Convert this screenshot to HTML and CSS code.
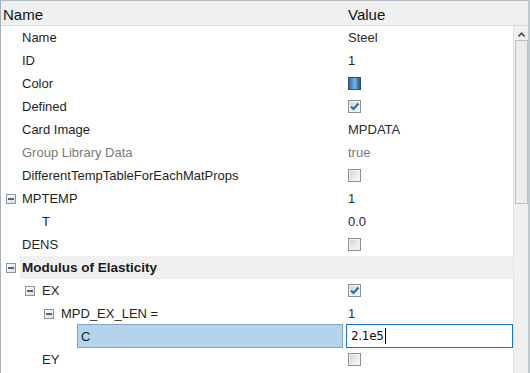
FILE: index.html
```html
<!DOCTYPE html>
<html lang="en">

<head>
    <meta charset="UTF-8">
    <title>Material Properties</title>
    <link rel="stylesheet" href="styles.css">
</head>

<body>
    <div class="grid">
        <div class="header">
            <div class="head-name">Name</div>
            <div class="head-value">Value</div>
        </div>

        <div class="body">
            <div class="rows">
                <div class="row">
                    <div class="gutter"></div>
                    <div class="main">
                        <div class="name">Name</div>
                        <div class="value">Steel</div>
                    </div>
                </div>
                <div class="row">
                    <div class="gutter"></div>
                    <div class="main">
                        <div class="name">ID</div>
                        <div class="value">1</div>
                    </div>
                </div>
                <div class="row">
                    <div class="gutter"></div>
                    <div class="main">
                        <div class="name">Color</div>
                        <div class="value"><span class="swatch"></span></div>
                    </div>
                </div>
                <div class="row">
                    <div class="gutter"></div>
                    <div class="main">
                        <div class="name">Defined</div>
                        <div class="value"><span class="check checked"><svg viewBox="0 0 11 11" width="11" height="11"><path d="M2 5.5 L4.5 8 L9.5 2.5" fill="none" stroke="#1f6db5" stroke-width="2"/></svg></span></div>
                    </div>
                </div>
                <div class="row">
                    <div class="gutter"></div>
                    <div class="main">
                        <div class="name">Card Image</div>
                        <div class="value">MPDATA</div>
                    </div>
                </div>
                <div class="row muted">
                    <div class="gutter"></div>
                    <div class="main">
                        <div class="name">Group Library Data</div>
                        <div class="value">true</div>
                    </div>
                </div>
                <div class="row">
                    <div class="gutter"></div>
                    <div class="main">
                        <div class="name">DifferentTempTableForEachMatProps</div>
                        <div class="value"><span class="check"></span></div>
                    </div>
                </div>
                <div class="row">
                    <div class="gutter"><span class="toggle"></span></div>
                    <div class="main">
                        <div class="name">MPTEMP</div>
                        <div class="value">1</div>
                    </div>
                </div>
                <div class="row">
                    <div class="gutter"></div>
                    <div class="main">
                        <div class="name leaf-1">T</div>
                        <div class="value">0.0</div>
                    </div>
                </div>
                <div class="row">
                    <div class="gutter"></div>
                    <div class="main">
                        <div class="name">DENS</div>
                        <div class="value"><span class="check"></span></div>
                    </div>
                </div>
                <div class="row section">
                    <div class="gutter"><span class="toggle"></span></div>
                    <div class="main">
                        <div class="name">Modulus of Elasticity</div>
                        <div class="value"></div>
                    </div>
                </div>
                <div class="row">
                    <div class="gutter"></div>
                    <div class="main">
                        <div class="name level-1"><span class="toggle"></span>EX</div>
                        <div class="value"><span class="check checked"><svg viewBox="0 0 11 11" width="11" height="11"><path d="M2 5.5 L4.5 8 L9.5 2.5" fill="none" stroke="#1f6db5" stroke-width="2"/></svg></span></div>
                    </div>
                </div>
                <div class="row">
                    <div class="gutter"></div>
                    <div class="main">
                        <div class="name level-2"><span class="toggle"></span>MPD_EX_LEN =</div>
                        <div class="value">1</div>
                    </div>
                </div>
                <div class="row">
                    <div class="gutter"></div>
                    <div class="main">
                        <div class="name level-3"><span class="selected">C</span></div>
                        <div class="value"><span class="editor">2.1e5<span class="caret"></span></span></div>
                    </div>
                </div>
                <div class="row">
                    <div class="gutter"></div>
                    <div class="main">
                        <div class="name leaf-1">EY</div>
                        <div class="value"><span class="check"></span></div>
                    </div>
                </div>
            </div>

            <div class="scrollbar">
                <div class="arrow">
                    <svg viewBox="0 0 7 5" width="7" height="5"><path d="M0.5 4.5 L3.5 1.2 L6.5 4.5" fill="none" stroke="#4a4a4a" stroke-width="1.6"/></svg>
                </div>
                <div class="thumb"></div>
            </div>
        </div>
    </div>
</body>

</html>
```

FILE: styles.css
```css
* {
    margin: 0;
    padding: 0;
    box-sizing: border-box;
}

body {
    font-family: 'Liberation Sans', Arial, sans-serif;
    font-size: 13px;
    color: #1f1f1f;
    background: white;
    width: 530px;
    height: 373px;
    overflow: hidden;
}

.grid {
    height: 373px;
    border-left: 1px solid #a9b1bc;
    border-top: 1px solid #b4bcc6;
    border-right: 2px solid #c3c9d1;
    display: flex;
    flex-direction: column;
}

.header {
    display: flex;
    height: 25px;
    background: #f0f0f0;
    border-bottom: 1px solid #d9dde2;
    font-size: 15px;
    color: #111;
    align-items: center;
    padding-top: 2px;
}

.head-name {
    width: 345px;
    padding-left: 2px;
}

.head-value {
    flex: 1;
    padding-left: 2px;
}

.body {
    flex: 1;
    display: flex;
    overflow: hidden;
}

.rows {
    flex: 1;
}

.row {
    display: flex;
    height: 23px;
}

.gutter {
    width: 19px;
    display: flex;
    align-items: center;
    padding-left: 5px;
}

.main {
    flex: 1;
    display: flex;
}

.name {
    width: 326px;
    display: flex;
    align-items: center;
    padding-left: 2px;
    white-space: nowrap;
}

.name.leaf-1 {
    padding-left: 22px;
}

.name.level-1 {
    padding-left: 5px;
}

.name.level-2 {
    padding-left: 24px;
}

.name.level-3 {
    padding-left: 57px;
    padding-right: 3px;
}

.value {
    flex: 1;
    display: flex;
    align-items: center;
    padding-left: 2px;
    color: #2b2b2b;
}

.row.muted .name,
.row.muted .value {
    color: #7a7a7a;
}

.row.section .main {
    background: #f0f0f0;
}

.row.section .name {
    font-weight: bold;
    font-size: 13.5px;
    color: #1a1a1a;
}

.toggle {
    display: inline-block;
    position: relative;
    width: 10px;
    height: 10px;
    border: 1px solid #939393;
    background: linear-gradient(135deg, #ffffff 0%, #dcdcdc 100%);
    margin-right: 7px;
    flex-shrink: 0;
}

.toggle::after {
    content: '';
    position: absolute;
    left: 1px;
    right: 1px;
    top: 3px;
    height: 2px;
    background: #4b6791;
}

.swatch {
    display: inline-block;
    width: 13px;
    height: 13px;
    border: 1px solid #3d4a58;
    background: linear-gradient(90deg, #2f6aab 0%, #5d9bd6 35%, #7fb6e6 55%, #3a79bd 80%, #2b5f9e 100%);
}

.check {
    display: inline-flex;
    align-items: center;
    justify-content: center;
    width: 13px;
    height: 13px;
    border: 1px solid #8e8f8f;
    background: linear-gradient(135deg, #cfcfcf 0%, #ececec 60%, #fbfbfb 100%);
    box-shadow: inset 0 0 0 1px #f4f4f4;
}

.check svg {
    display: block;
}

.selected {
    flex: 1;
    height: 24px;
    margin-top: -1px;
    display: flex;
    align-items: center;
    padding-left: 3px;
    background: #b3d4ea;
    border: 1px solid #7fa4cb;
    color: #1a1a1a;
}

.editor {
    flex: 1;
    height: 24px;
    margin-top: -1px;
    margin-left: -2px;
    display: flex;
    align-items: center;
    padding-left: 4px;
    background: white;
    border: 1px solid #1c73c9;
    color: #111;
    font-family: 'DejaVu Sans', sans-serif;
    font-size: 12px;
    letter-spacing: -0.3px;
}

.caret {
    display: inline-block;
    width: 1px;
    height: 16px;
    margin-left: 1px;
    background: #000;
}

.scrollbar {
    width: 15px;
    background: #f0f0f0;
    border-left: 1px solid #e2e2e2;
    display: flex;
    flex-direction: column;
}

.arrow {
    height: 14px;
    display: flex;
    align-items: center;
    justify-content: center;
    padding-top: 2px;
}

.thumb {
    height: 164px;
    margin: 0 0 0 1px;
    border: 1px solid #b9c3cd;
    background: #ececec;
}
```
